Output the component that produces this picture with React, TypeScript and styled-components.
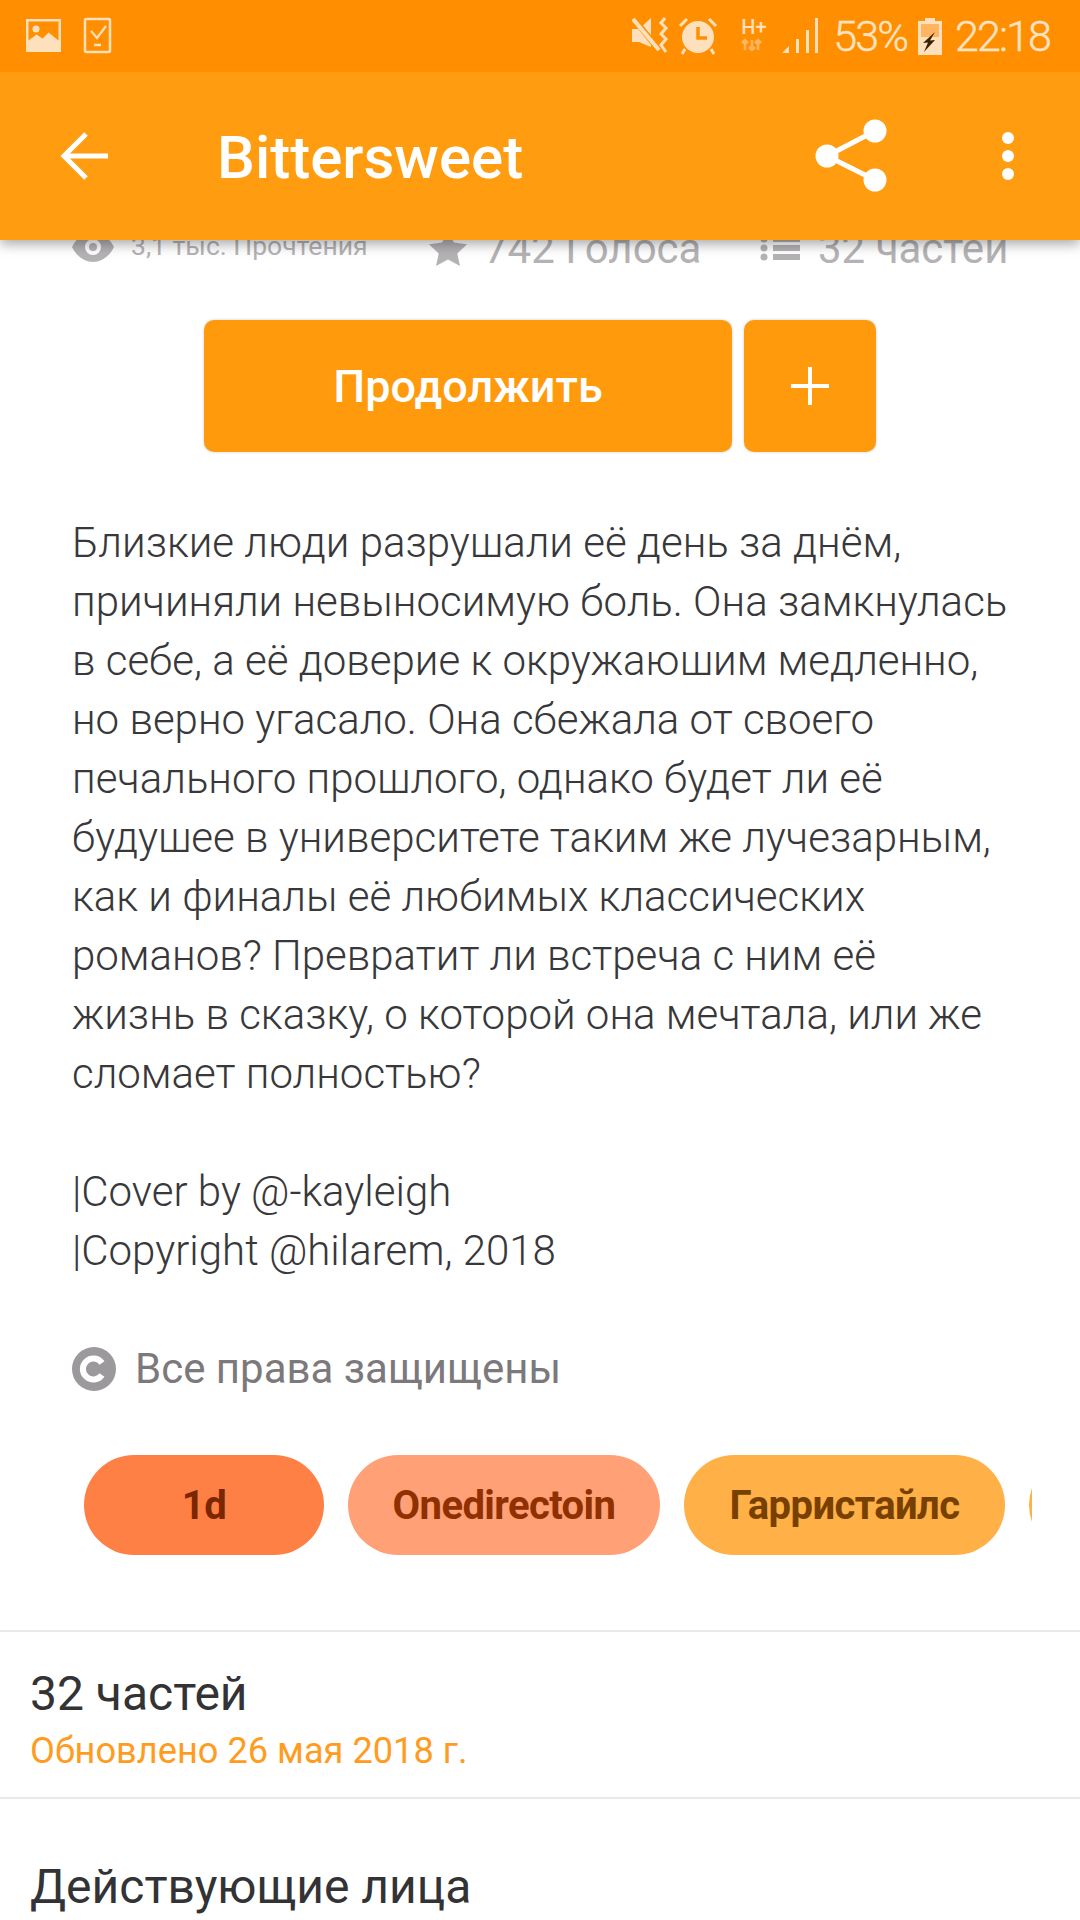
import React from "react";
import styled, { createGlobalStyle } from "styled-components";

const Global = createGlobalStyle`
  html, body { margin: 0; padding: 0; background: #fff; }
  body { font-family: Roboto, "Noto Sans", sans-serif; }
`;

const Page = styled.div`
  width: 1080px;
  height: 1920px;
  overflow: hidden;
  background: #fff;
  display: flex;
  flex-direction: column;
`;

const StatusBar = styled.div`
  height: 72px;
  flex: none;
  background: #ff8f00;
  color: #ffe0bd;
  display: flex;
  align-items: center;
  justify-content: space-between;
  padding: 0 30px 0 26px;
  position: relative;
  z-index: 3;
`;

const StatusGroup = styled.div`
  display: flex;
  align-items: center;
`;

const StatusText = styled.span<{ $ml: number }>`
  margin-left: ${(p) => p.$ml}px;
  font-size: 43px;
  line-height: 72px;
  font-weight: 300;
  color: #ffe3c4;
  letter-spacing: -1.9px;
  -webkit-text-stroke: 0.4px #ffe3c4;
`;

const NetworkBadge = styled.div`
  width: 29px;
  height: 38px;
  margin-left: 23px;
  flex: none;
  display: flex;
  flex-direction: column;
  align-items: flex-start;
`;

const NetworkLabel = styled.span`
  font-size: 20px;
  line-height: 21px;
  font-weight: 500;
  color: #ffe0bd;
  white-space: nowrap;
`;

const AppBar = styled.header`
  height: 168px;
  flex: none;
  background: #ff9c0f;
  display: flex;
  align-items: center;
  box-shadow: 0 4px 12px rgba(0, 0, 0, 0.35);
  position: relative;
  z-index: 2;
`;

const BackSlot = styled.div`
  width: 217px;
  padding-left: 60px;
  box-sizing: border-box;
  display: flex;
`;

const Title = styled.h1`
  flex: 1;
  margin: 2px 0 0;
  font-size: 60px;
  font-weight: 500;
  color: #fff;
`;

const ActionSlot = styled.div`
  display: flex;
  align-items: center;
`;

const Content = styled.main`
  display: flex;
  flex-direction: column;
  flex: 1;
  min-height: 0;
  & > * {
    flex-shrink: 0;
  }
`;

const StatsRow = styled.div`
  height: 40px;
  margin-top: -12px;
  display: flex;
  align-items: center;
  padding-left: 72px;
  color: #b4b2b4;
`;

const Stat = styled.div<{ $w: number }>`
  width: ${(p) => p.$w}px;
  display: flex;
  align-items: center;
  flex: none;
`;

const StatSmall = styled.span`
  font-size: 26.5px;
  margin-left: 17px;
  margin-top: -6px;
  white-space: nowrap;
`;

const StatLarge = styled.span<{ $ml: number }>`
  font-size: 42px;
  margin-left: ${(p) => p.$ml}px;
  white-space: nowrap;
`;

const ButtonRow = styled.div`
  display: flex;
  gap: 12px;
  margin: 52px 0 0 204px;
`;

const Button = styled.button<{ $w: number }>`
  width: ${(p) => p.$w}px;
  height: 132px;
  border: none;
  border-radius: 10px;
  background: #ff9a0c;
  color: #fff;
  font-family: Roboto, sans-serif;
  font-size: 45px;
  font-weight: 500;
  padding: 0;
  display: flex;
  align-items: center;
  justify-content: center;
  box-shadow: 0 0 3px rgba(0, 0, 0, 0.2);
`;

const Description = styled.p`
  margin: 61px 0 0;
  padding: 0 30px 0 72px;
  font-size: 42px;
  font-weight: 300;
  line-height: 59px;
  color: #38383a;
  white-space: pre-line;
`;

const Rights = styled.div`
  display: flex;
  align-items: center;
  margin: 67px 0 0 72px;
  gap: 19px;
  font-size: 42px;
  line-height: 44px;
  color: #7b797b;
`;

const ChipRow = styled.div`
  display: flex;
  gap: 24px;
  margin: 64px 48px 0 84px;
  overflow: hidden;
`;

const Chip = styled.div<{ $bg: string; $fg: string; $w: number }>`
  width: ${(p) => p.$w}px;
  height: 100px;
  flex: none;
  border-radius: 50px;
  background: ${(p) => p.$bg};
  color: ${(p) => p.$fg};
  font-size: 40px;
  letter-spacing: -0.6px;
  font-weight: 700;
  display: flex;
  align-items: center;
  justify-content: center;
`;

const Section = styled.section<{ $h: number; $mt: number }>`
  border-top: 2px solid #e9e9eb;
  margin-top: ${(p) => p.$mt}px;
  padding: 34px 30px 0;
  height: ${(p) => p.$h}px;
  box-sizing: border-box;
`;

const SectionTitle = styled.div<{ $mt: number }>`
  margin-top: ${(p) => p.$mt}px;
  font-size: 48px;
  line-height: 56px;
  color: #333335;
`;

const Updated = styled.div`
  font-size: 36.2px;
  line-height: 40px;
  margin-top: 9px;
  color: #ff9c1f;
`;

const StatusIcon = styled.svg<{ $ml?: number }>`
  margin-left: ${(p) => p.$ml ?? 0}px;
  flex: none;
`;

const EyeIcon = styled.svg`
  margin-top: -3px;
  flex: none;
`;

const DotsIcon = styled.svg`
  margin-left: 110px;
  margin-right: 63px;
`;

export default function App() {
  return (
    <Page>
      <Global />
      <StatusBar>
        <StatusGroup>
          <StatusIcon width="36" height="36" viewBox="0 0 36 36">
            <path fill="#ffe0bd" fillRule="evenodd" d="M0 1h35v33H0zM2.500 3.500v19l8-6 6 4 6-6 10 8v-19z" />
            <circle cx="10" cy="11" r="3.500" fill="#ffe0bd" />
          </StatusIcon>
          <StatusIcon $ml={21} width="30" height="38" viewBox="0 0 30 38">
            <rect x="2" y="2" width="25" height="33" rx="1.500" fill="none" stroke="#ffe0bd" strokeWidth="2.500" />
            <path d="M8 14l6 7 9-12" fill="none" stroke="#ffe0bd" strokeWidth="2.200" />
            <path d="M11 28h7" stroke="#ffe0bd" strokeWidth="2.500" />
          </StatusIcon>
        </StatusGroup>
        <StatusGroup>
          <StatusIcon width="38" height="38" viewBox="0 0 38 38">
            <path fill="#ffe0bd" d="M0 12h7L19 1v29L7 25H0z" />
            <path d="M2 2l25 31" stroke="#ff8f00" strokeWidth="6" />
            <path d="M1 2l26 31" stroke="#ffe0bd" strokeWidth="4" />
            <path d="M33 1l-4 5 5 5-5 6 5 5-5 6 5 7" fill="none" stroke="#ffe0bd" strokeWidth="3" />
          </StatusIcon>
          <StatusIcon $ml={8} width="40" height="38" viewBox="0 0 38 38">
            <circle cx="19" cy="20" r="16" fill="#ffe0bd" />
            <path d="M19 10v11h9" fill="none" stroke="#ff8f00" strokeWidth="3.500" />
            <path d="M1 9l7-7M37 9l-7-7M6 32l-3 5M32 32l3 5" stroke="#ffe0bd" strokeWidth="3" />
          </StatusIcon>
          <NetworkBadge>
            <NetworkLabel>H+</NetworkLabel>
            <svg width="22" height="13" viewBox="0 0 22 13">
              <path d="M4 2v10M1 5l3-3 3 3M11 2v10M8 9l3 3 3-3M17 12V2M14 5l3-3 3 3" stroke="#ffb45f" strokeWidth="2.500" fill="none" />
            </svg>
          </NetworkBadge>
          <StatusIcon $ml={12} width="36" height="38" viewBox="0 0 36 38">
            <path fill="#ffe0bd" d="M0 36l7-7v7zM14 22h3v14h-3zM24 13h3v23h-3zM33 1h3v35h-3z" />
          </StatusIcon>
          <StatusText $ml={15}>53%</StatusText>
          <StatusIcon $ml={11} width="24" height="38" viewBox="0 0 24 38">
            <path fill="#ffe0bd" d="M7 1h10v3h7v34H0V4h7z" />
            <rect x="3" y="7" width="18" height="13" fill="#ffb45f" />
            <path fill="#3a2200" d="M17 15L5 26l5-.5L6 35l11-12-5 .5z" />
          </StatusIcon>
          <StatusText $ml={13}>22:18</StatusText>
        </StatusGroup>
      </StatusBar>
      <AppBar>
        <BackSlot>
          <svg width="50" height="50" viewBox="0 0 50 50">
            <path d="M48 25H5M26 3L4 25l22 22" fill="none" stroke="#fff" strokeWidth="5" />
          </svg>
        </BackSlot>
        <Title>Bittersweet</Title>
        <ActionSlot>
          <svg width="74" height="74" viewBox="0 0 74 74">
            <path d="M12 37L60 12M12 37l48 24" stroke="#fff" strokeWidth="5" fill="none" />
            <circle cx="12" cy="37" r="11.500" fill="#fff" />
            <circle cx="60" cy="12" r="11.500" fill="#fff" />
            <circle cx="60" cy="61" r="11.500" fill="#fff" />
          </svg>
          <DotsIcon width="18" height="50" viewBox="0 0 18 50">
            <circle cx="9" cy="7" r="6" fill="#fff" />
            <circle cx="9" cy="25" r="6" fill="#fff" />
            <circle cx="9" cy="43" r="6" fill="#fff" />
          </DotsIcon>
        </ActionSlot>
      </AppBar>
      <Content>
        <StatsRow>
          <Stat $w={357}>
            <EyeIcon width="42" height="30" viewBox="0 0 42 30">
              <path fill="#b4b2b4" fillRule="evenodd" d="M0 15C5 5 13 0 21 0s16 5 21 15c-5 10-13 15-21 15S5 25 0 15zm21 8a8 8 0 100-16 8 8 0 000 16z" />
              <circle cx="21" cy="15" r="4" fill="#b4b2b4" />
            </EyeIcon>
            <StatSmall>3,1 тыс. Прочтения</StatSmall>
          </Stat>
          <Stat $w={331}>
            <svg width="38" height="36" viewBox="0 0 38 36">
              <path fill="#b4b2b4" d="M19 0l5.800 12.600L38 14.300l-9.700 9.300L31 36 19 29.400 7 36l2.700-12.400L0 14.300l13.200-1.700z" />
            </svg>
            <StatLarge $ml={17}>742 Голоса</StatLarge>
          </Stat>
          <Stat $w={260}>
            <svg width="40" height="26" viewBox="0 0 40 26">
              <circle cx="4" cy="4" r="3.500" fill="#b4b2b4" />
              <circle cx="4" cy="13" r="3.500" fill="#b4b2b4" />
              <circle cx="4" cy="22" r="3.500" fill="#b4b2b4" />
              <path fill="#b4b2b4" d="M13 1h27v6H13zM13 10h27v6H13zM13 19h27v6H13z" />
            </svg>
            <StatLarge $ml={18}>32 частей</StatLarge>
          </Stat>
        </StatsRow>
        <ButtonRow>
          <Button $w={528}>Продолжить</Button>
          <Button $w={132} aria-label="add">
            <svg width="40" height="40" viewBox="0 0 40 40">
              <path d="M20 1v38M1 20h38" stroke="#fff" strokeWidth="4" />
            </svg>
          </Button>
        </ButtonRow>
        <Description>{`Близкие люди разрушали её день за днём,
причиняли невыносимую боль. Она замкнулась
в себе, а её доверие к окружаюшим медленно,
но верно угасало. Она сбежала от своего
печального прошлого, однако будет ли её
будушее в университете таким же лучезарным,
как и финалы её любимых классических
романов? Превратит ли встреча с ним её
жизнь в сказку, о которой она мечтала, или же
сломает полностью?

|Cover by @-kayleigh
|Copyright @hilarem, 2018`}</Description>
        <Rights>
          <svg width="44" height="44" viewBox="0 0 44 44">
            <circle cx="22" cy="22" r="22" fill="#9b999b" />
            <path d="M30 16a10.500 10.500 0 100 12" fill="none" stroke="#fff" strokeWidth="6" />
          </svg>
          Все права защищены
        </Rights>
        <ChipRow>
          <Chip $w={240} $bg="#ff8044" $fg="#7a2600">1d</Chip>
          <Chip $w={312} $bg="#ffa077" $fg="#8f3000">Onedirectoin</Chip>
          <Chip $w={321} $bg="#ffb046" $fg="#774000">Гарристайлс</Chip>
          <Chip $w={240} $bg="#ffb046" $fg="#774000" />
        </ChipRow>
        <Section $h={167} $mt={75}>
          <SectionTitle $mt={0}>32 частей</SectionTitle>
          <Updated>Обновлено 26 мая 2018 г.</Updated>
        </Section>
        <Section $h={130} $mt={0}>
          <SectionTitle $mt={26}>Действующие лица</SectionTitle>
        </Section>
      </Content>
    </Page>
  );
}
